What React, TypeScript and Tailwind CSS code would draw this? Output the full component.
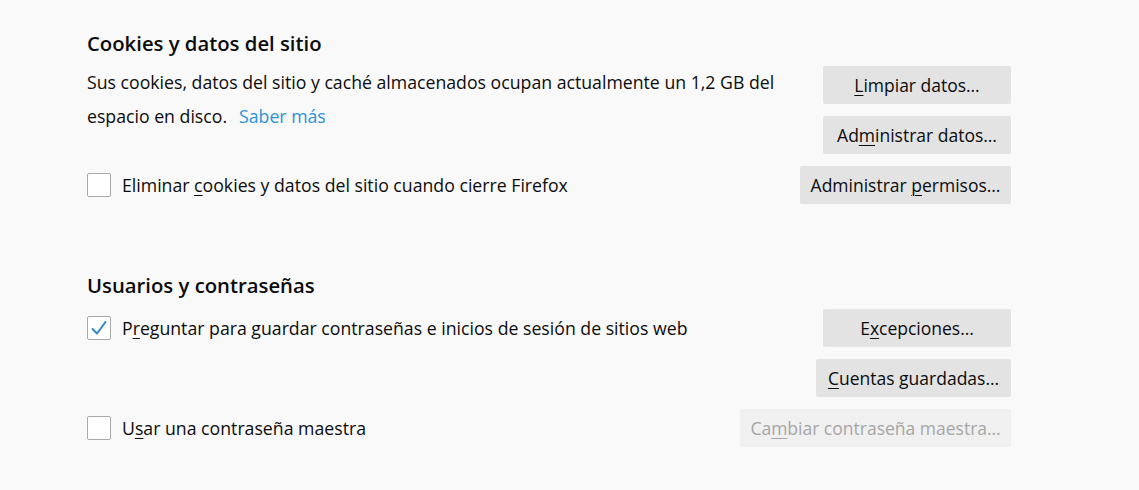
import React from "react";

const font = { fontFamily: '"Open Sans", "Noto Sans", Arial, sans-serif' };

function Btn({ children, w, disabled }: { children: React.ReactNode; w: string; disabled?: boolean }) {
  return (
    <div
      className={
        "h-[38px] flex items-center justify-center text-[17.5px] rounded-[2px] " +
        w +
        (disabled ? " bg-[#f0f0f0] text-[#a6a6a6]" : " bg-[#e3e3e4] text-[#0c0c0d]")
      }
    >
      <span>{children}</span>
    </div>
  );
}

function Check({ checked }: { checked?: boolean }) {
  return (
    <div className="w-[24px] h-[24px] border border-[#a9a9ab] bg-white rounded-[2px] flex items-center justify-center shrink-0">
      {checked && (
        <svg width="18" height="18" viewBox="0 0 18 18">
          <path d="M2.5 10 L7 14.5 L15.5 3" fill="none" stroke="#2f86c9" strokeWidth="2" strokeLinecap="round" strokeLinejoin="round" />
        </svg>
      )}
    </div>
  );
}

const U = ({ children }: { children: React.ReactNode }) => (
  <span className="underline underline-offset-[3px] decoration-[1px]">{children}</span>
);

export default function App() {
  return (
    <div className="w-[1139px] h-[490px] bg-[#f9f9fa] text-[#0c0c0d] overflow-hidden" style={font}>
      <div className="ml-[87px] w-[924px] pt-[30px]">
        <div className="h-[26px] leading-[26px] text-[20.3px] font-semibold">Cookies y datos del sitio</div>
        <div className="mt-[10px] flex justify-between">
          <div className="w-[705px] text-[17.7px] leading-[34px] -mt-[1px]">
            <div>Sus cookies, datos del sitio y caché almacenados ocupan actualmente un 1,2 GB del</div>
            <div className="flex gap-[12px]">
              <span>espacio en disco.</span>
              <span className="text-[#2a93d6]">Saber más</span>
            </div>
          </div>
          <div className="flex flex-col gap-[12px] items-end">
            <Btn w="w-[188px]"><U>L</U>impiar datos…</Btn>
            <Btn w="w-[188px]">Ad<U>m</U>inistrar datos…</Btn>
          </div>
        </div>
        <div className="mt-[12px] flex items-center justify-between">
          <div className="flex items-center gap-[11px]">
            <Check />
            <span className="text-[17.7px]">Eliminar <U>c</U>ookies y datos del sitio cuando cierre Firefox</span>
          </div>
          <Btn w="w-[211px]">Administrar <U>p</U>ermisos…</Btn>
        </div>

        <div className="mt-[68px] h-[26px] leading-[26px] text-[20.3px] font-semibold">Usuarios y contraseñas</div>
        <div className="mt-[11px] flex items-center justify-between">
          <div className="flex items-center gap-[11px]">
            <Check checked />
            <span className="text-[17.7px]">P<U>r</U>eguntar para guardar contraseñas e inicios de sesión de sitios web</span>
          </div>
          <Btn w="w-[188px]">E<U>x</U>cepciones…</Btn>
        </div>
        <div className="mt-[12px] flex justify-end">
          <Btn w="w-[195px]"><U>C</U>uentas guardadas…</Btn>
        </div>
        <div className="mt-[12px] flex items-center justify-between">
          <div className="flex items-center gap-[11px]">
            <Check />
            <span className="text-[17.7px]">U<U>s</U>ar una contraseña maestra</span>
          </div>
          <Btn w="w-[271px]" disabled>Ca<U>m</U>biar contraseña maestra…</Btn>
        </div>
      </div>
    </div>
  );
}
